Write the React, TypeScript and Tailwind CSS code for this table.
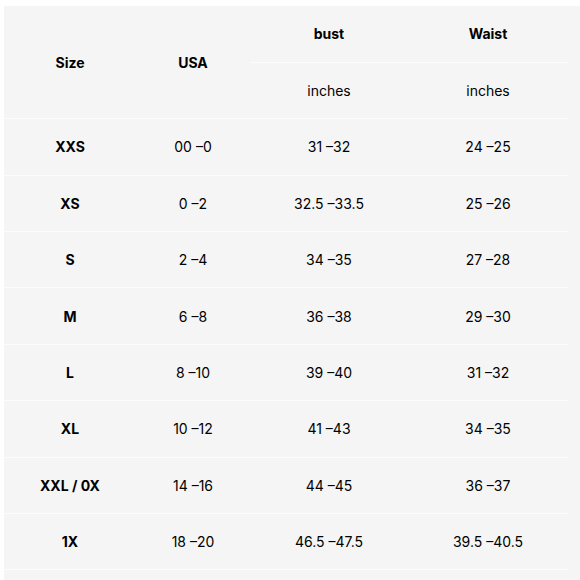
const rows = [
  ['XXS', '00 –0', '31 –32', '24 –25'],
  ['XS', '0 –2', '32.5 –33.5', '25 –26'],
  ['S', '2 –4', '34 –35', '27 –28'],
  ['M', '6 –8', '36 –38', '29 –30'],
  ['L', '8 –10', '39 –40', '31 –32'],
  ['XL', '10 –12', '41 –43', '34 –35'],
  ['XXL / 0X', '14 –16', '44 –45', '36 –37'],
  ['1X', '18 –20', '46.5 –47.5', '39.5 –40.5'],
];

export default function App() {
  return (
    <div className="h-[580px] w-[580px] overflow-hidden bg-white pl-[4px] pt-[6px] text-[14px] text-black font-['Inter','Liberation_Sans',sans-serif]">
      <div className="h-full bg-[#f5f5f5]">
        <table className="table-fixed border-collapse text-center">
          <colgroup>
            <col className="w-[132px]" />
            <col className="w-[114px]" />
            <col className="w-[158px]" />
            <col className="w-[160px]" />
          </colgroup>
          <thead>
            <tr className="h-[56.4px] border-b border-[#fcfcfc]">
              <th rowSpan={2} className="font-bold">Size</th>
              <th rowSpan={2} className="font-bold">USA</th>
              <th className="font-bold">bust</th>
              <th className="font-bold">Waist</th>
            </tr>
            <tr className="h-[56.4px] border-b border-[#fcfcfc]">
              <td>inches</td>
              <td>inches</td>
            </tr>
          </thead>
          <tbody>
            {rows.map((r) => (
              <tr key={r[0]} className="h-[56.4px] border-b border-[#fcfcfc]">
                <td className="font-bold">{r[0]}</td>
                <td>{r[1]}</td>
                <td>{r[2]}</td>
                <td>{r[3]}</td>
              </tr>
            ))}
          </tbody>
        </table>
      </div>
    </div>
  );
}
